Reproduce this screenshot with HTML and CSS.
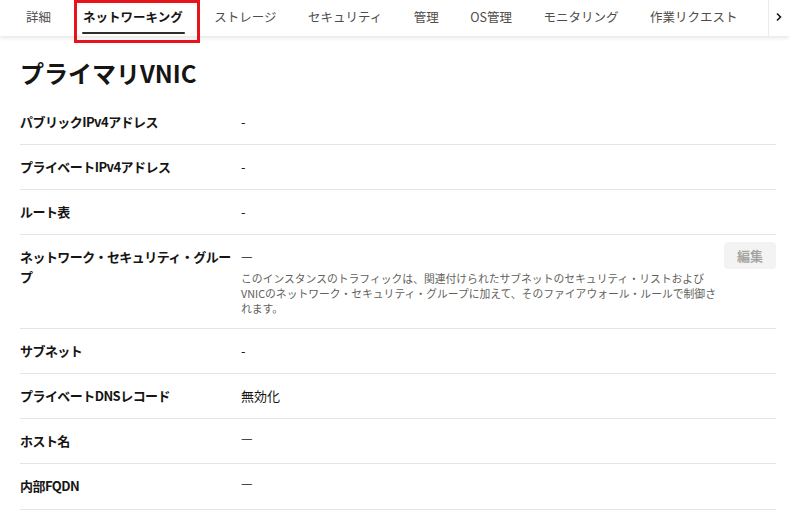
FILE: index.html
```html
<!DOCTYPE html>
<html lang="ja">
<head>
<meta charset="utf-8">
<link rel="stylesheet" href="styles.css">
</head>
<body>
<div class="tabbar">
  <div class="tabs">
    <div class="tab">詳細</div>
    <div class="tab active">ネットワーキング</div>
    <div class="tab">ストレージ</div>
    <div class="tab">セキュリティ</div>
    <div class="tab">管理</div>
    <div class="tab">OS管理</div>
    <div class="tab">モニタリング</div>
    <div class="tab">作業リクエスト</div>
  </div>
  <div class="more">
    <svg width="8" height="10" viewBox="0 0 8 10"><path d="M2 1.5 L5.5 5 L2 8.5" fill="none" stroke="#161513" stroke-width="1.6"/></svg>
  </div>
  <div class="highlight"></div>
</div>
<main class="content">
  <h1 class="title">プライマリVNIC</h1>
  <div class="row"><div class="label">パブリックIPv4アドレス</div><div class="value">-</div></div>
  <div class="row"><div class="label">プライベートIPv4アドレス</div><div class="value">-</div></div>
  <div class="row"><div class="label">ルート表</div><div class="value">-</div></div>
  <div class="row">
    <div class="label">ネットワーク・セキュリティ・グルー<br>プ</div>
    <div class="value">
      <div class="dash">—</div>
      <p class="desc">このインスタンスのトラフィックは、関連付けられたサブネットのセキュリティ・リストおよびVNICのネットワーク・セキュリティ・グループに加えて、そのファイアウォール・ルールで制御されます。</p>
    </div>
    <div class="action"><button class="btn">編集</button></div>
  </div>
  <div class="row"><div class="label">サブネット</div><div class="value">-</div></div>
  <div class="row"><div class="label">プライベートDNSレコード</div><div class="value">無効化</div></div>
  <div class="row"><div class="label">ホスト名</div><div class="value dashv">—</div></div>
  <div class="row last"><div class="label">内部FQDN</div><div class="value dashv">—</div></div>
</main>
</body>
</html>
```
FILE: styles.css
```css
* { box-sizing: border-box; }
html, body { margin: 0; padding: 0; background: #fff; }
body {
  font-family: "Noto Sans CJK JP", "Noto Sans", sans-serif;
  color: #161513;
  overflow: hidden;
}
.tabbar {
  position: relative;
  height: 36px;
  display: flex;
  background: #fff;
  box-shadow: 0 2px 4px rgba(0,0,0,0.10);
}
.tabs {
  flex: 1;
  display: flex;
  padding-left: 10px;
  overflow: hidden;
}
.tab {
  position: relative;
  padding: 0 16px;
  height: 36px;
  line-height: 34px;
  font-size: 12.5px;
  color: #4f4c4a;
  white-space: nowrap;
}
.tab:nth-child(n+3) { margin-left: -0.5px; }
.tab.active {
  font-weight: 700;
  color: #161513;
}
.tab.active::after {
  content: "";
  position: absolute;
  left: 15px;
  right: 14px;
  bottom: 2px;
  height: 2px;
  border-radius: 1px;
  background: #312d2a;
}
.more {
  width: 21px;
  border-left: 1px solid #ebebeb;
  display: flex;
  align-items: center;
  justify-content: center;
  padding-bottom: 3px;
}
.highlight {
  position: absolute;
  left: 74px;
  top: 0;
  width: 126px;
  height: 43px;
  border: 3px solid #e8141c;
  z-index: 5;
}
.content {
  padding: 0 13px 0 20px;
}
.title {
  margin: 21px 0 11px;
  font-size: 24px;
  line-height: 32px;
  font-weight: 700;
  color: #161513;
}
.row {
  display: grid;
  grid-template-columns: 221px 1fr auto;
  padding: 12px 0;
  border-bottom: 1px solid #e4e4e4;
  font-size: 13px;
  line-height: 20px;
}
.row.last { padding-bottom: 13px; }
.label {
  font-weight: 700;
  letter-spacing: -0.55px;
  margin-right: -6px;
}
.value { color: #161513; }
.dashv { line-height: 14px; }
.dash { line-height: 18px; }
.desc {
  margin: 6px 0 0;
  max-width: 484px;
  font-size: 10.8px;
  line-height: 15px;
  color: #625f5c;
}
.action { display: flex; align-items: flex-start; }
.btn {
  margin-top: -5px;
  width: 52px;
  height: 27px;
  border: none;
  border-radius: 4px;
  background: #f3f3f3;
  color: #a7a5a3;
  font-family: inherit;
  font-size: 13px;
  font-weight: 700;
  padding: 0;
}
```
